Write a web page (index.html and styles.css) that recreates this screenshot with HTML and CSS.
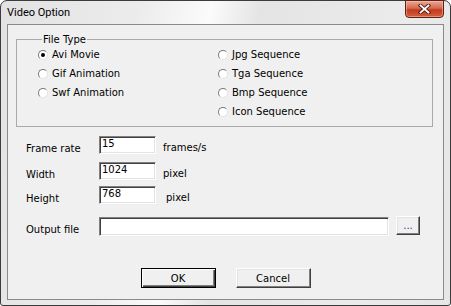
FILE: index.html
```html
<!DOCTYPE html>
<html lang="en">
<head>
    <meta charset="UTF-8">
    <title>Video Option</title>
    <link rel="stylesheet" href="styles.css">
</head>
<body>
    <div class="window">
        <div class="titlebar">
            <span class="title">Video Option</span>
            <button class="close" type="button" aria-label="Close">
                <svg width="13" height="10" viewBox="0 0 13 10">
                    <path d="M2.5 1.5 L10.5 8.5 M10.5 1.5 L2.5 8.5" stroke="#4a1c12" stroke-width="3.6" stroke-linecap="square"/>
                    <path d="M2.5 1.5 L10.5 8.5 M10.5 1.5 L2.5 8.5" stroke="#fff" stroke-width="1.8" stroke-linecap="square"/>
                </svg>
            </button>
        </div>

        <form class="client">
            <fieldset class="group">
                <legend>File Type</legend>
                <div class="radio-grid">
                    <label class="radio"><span class="dot checked"></span>Avi Movie</label>
                    <label class="radio"><span class="dot"></span>Jpg Sequence</label>
                    <label class="radio"><span class="dot"></span>Gif Animation</label>
                    <label class="radio"><span class="dot"></span>Tga Sequence</label>
                    <label class="radio"><span class="dot"></span>Swf Animation</label>
                    <label class="radio"><span class="dot"></span>Bmp Sequence</label>
                    <span></span>
                    <label class="radio"><span class="dot"></span>Icon Sequence</label>
                </div>
            </fieldset>

            <div class="row row-rate">
                <span class="label">Frame rate</span>
                <input class="field" type="text" value="15">
                <span class="unit">frames/s</span>
            </div>
            <div class="row row-width">
                <span class="label">Width</span>
                <input class="field" type="text" value="1024">
                <span class="unit">pixel</span>
            </div>
            <div class="row row-height">
                <span class="label">Height</span>
                <input class="field" type="text" value="768">
                <span class="unit unit-far">pixel</span>
            </div>
            <div class="row row-output">
                <span class="label">Output file</span>
                <input class="field field-wide" type="text" value="">
                <button class="btn btn-browse" type="button">...</button>
            </div>

            <div class="actions">
                <button class="btn btn-default" type="button">OK</button>
                <button class="btn" type="button">Cancel</button>
            </div>
        </form>
    </div>
</body>
</html>
```

FILE: styles.css
```css
* {
    margin: 0;
    padding: 0;
    box-sizing: border-box;
}

body {
    font-family: "DejaVu Sans", Verdana, sans-serif;
    font-size: 10px;
    color: #000;
    background: #fff;
}

/* Window frame */
.window {
    width: 451px;
    height: 306px;
    display: flex;
    flex-direction: column;
    padding: 0 6px 5px 6px;
    border: 1px solid #3c3c3c;
    border-radius: 7px 7px 3px 3px;
    background: linear-gradient(100deg, #e2e2e2 0%, #ececec 28%, #fbfbfb 42%, #e4e4e4 52%, #ebebeb 80%, #e6e6e6 100%);
}

.titlebar {
    height: 23px;
    display: flex;
    align-items: flex-start;
    justify-content: space-between;
}

.title {
    font-family: Roboto, "Noto Sans", sans-serif;
    font-size: 11px;
    line-height: 23px;
    color: #000;
}

.close {
    width: 39px;
    height: 18px;
    margin-top: -1px;
    display: flex;
    align-items: center;
    justify-content: center;
    border: 1px solid #5e1f14;
    border-radius: 0 0 4px 4px;
    background: linear-gradient(#e7a996 0%, #d66a4f 45%, #c5391c 55%, #d2603f 100%);
    box-shadow: inset 0 0 0 1px rgba(255, 210, 190, 0.45);
}

/* Client area */
.client {
    flex: 1;
    border: 1px solid #8a8a8a;
    background: #f0f0f0;
    padding: 8px 0 0 8px;
}

.group {
    width: 417px;
    border: 1px solid #a9a9a9;
    padding: 0 0 5px 21px;
}

.group legend {
    margin-left: 4px;
    padding: 0 1px;
    line-height: 13px;
}

.radio-grid {
    display: grid;
    grid-template-columns: 180px 180px;
    grid-auto-rows: 19px;
    margin-top: -1px;
}

.radio {
    display: flex;
    align-items: center;
    gap: 4px;
}

.dot {
    width: 10px;
    height: 10px;
    border-radius: 50%;
    background: #fff;
    border: 1px solid;
    border-color: #7a7a7a #e2e2e2 #e2e2e2 #7a7a7a;
    display: flex;
    align-items: center;
    justify-content: center;
}

.dot.checked::after {
    content: '';
    width: 4px;
    height: 4px;
    border-radius: 50%;
    background: #000;
}

/* Value rows */
.row {
    display: flex;
    align-items: flex-start;
    height: 18px;
    padding-left: 10px;
}

.row-rate { margin-top: 9px; }
.row-width { margin-top: 8px; }
.row-height { margin-top: 6px; }
.row-output { margin-top: 13px; height: 19px; }

.label {
    width: 73px;
    margin-top: 6px;
    line-height: 13px;
}

.unit {
    margin-left: 7px;
    margin-top: 5px;
    line-height: 13px;
}

.unit-far {
    margin-left: 10px;
}

.field {
    width: 57px;
    height: 18px;
    font: inherit;
    color: #000;
    background: #fff;
    border: 1px solid;
    border-color: #808080 #fff #fff #808080;
    box-shadow: inset 1px 1px #404040, inset -1px -1px #e3e3e3;
    padding: 0 2px 4px 2px;
    outline: none;
}

.field-wide {
    width: 290px;
    height: 19px;
}

/* Buttons */
.btn {
    font: inherit;
    color: #000;
    background: #f0f0f0;
    border: 1px solid;
    border-color: #fff #404040 #404040 #fff;
    box-shadow: inset -1px -1px #808080, inset 1px 1px #e3e3e3;
    width: 75px;
    height: 20px;
}

.btn-default {
    border-color: #000;
    box-shadow: inset 1px 1px #fff, inset -1px -1px #404040, inset -2px -2px #808080;
}

.btn-browse {
    width: 24px;
    height: 19px;
    margin-left: 7px;
    margin-top: -1px;
    line-height: 10px;
    color: #1a3c8c;
}

.actions {
    display: flex;
    justify-content: center;
    gap: 20px;
    margin-top: 32px;
    padding-right: 8px;
}
```
